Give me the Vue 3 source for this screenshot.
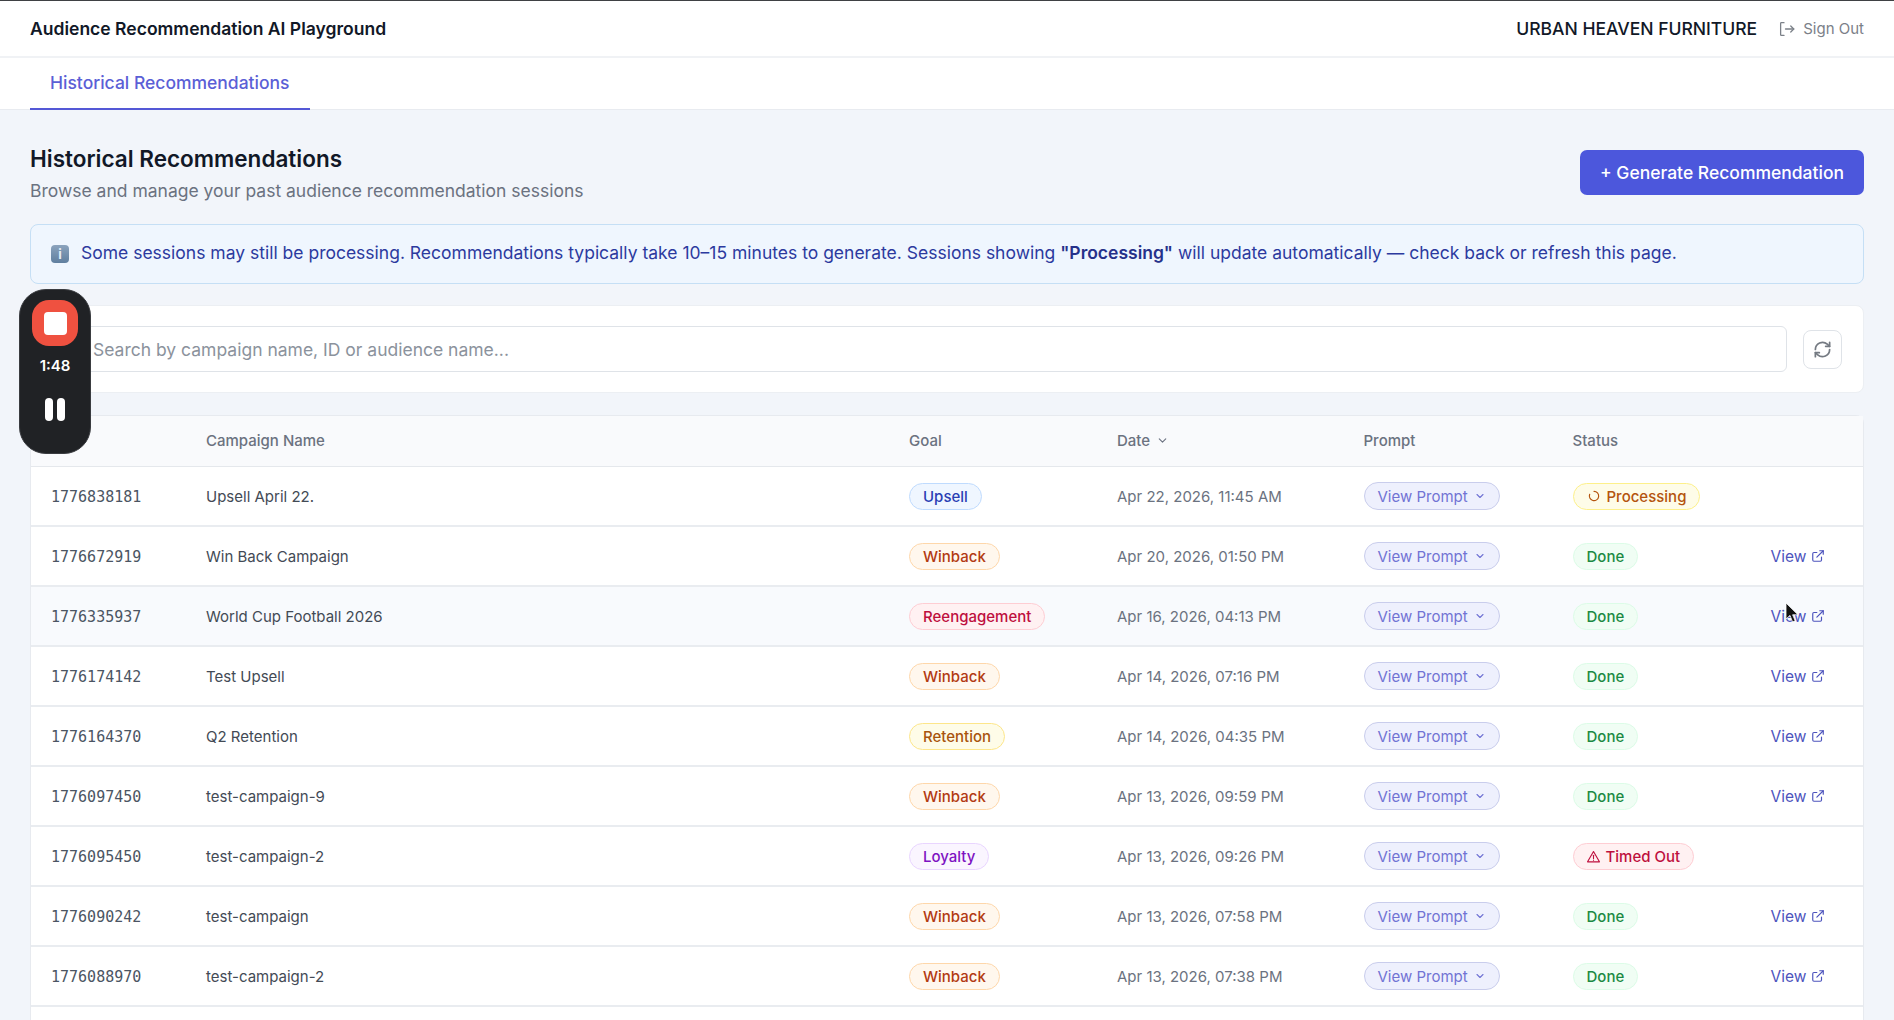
<script setup>
const rows = [
  { id: '1776838181', name: 'Upsell April 22.', goal: 'Upsell', date: 'Apr 22, 2026, 11:45 AM', status: 'Processing' },
  { id: '1776672919', name: 'Win Back Campaign', goal: 'Winback', date: 'Apr 20, 2026, 01:50 PM', status: 'Done' },
  { id: '1776335937', name: 'World Cup Football 2026', goal: 'Reengagement', date: 'Apr 16, 2026, 04:13 PM', status: 'Done', hover: true },
  { id: '1776174142', name: 'Test Upsell', goal: 'Winback', date: 'Apr 14, 2026, 07:16 PM', status: 'Done' },
  { id: '1776164370', name: 'Q2 Retention', goal: 'Retention', date: 'Apr 14, 2026, 04:35 PM', status: 'Done' },
  { id: '1776097450', name: 'test-campaign-9', goal: 'Winback', date: 'Apr 13, 2026, 09:59 PM', status: 'Done' },
  { id: '1776095450', name: 'test-campaign-2', goal: 'Loyalty', date: 'Apr 13, 2026, 09:26 PM', status: 'Timed Out' },
  { id: '1776090242', name: 'test-campaign', goal: 'Winback', date: 'Apr 13, 2026, 07:58 PM', status: 'Done' },
  { id: '1776088970', name: 'test-campaign-2', goal: 'Winback', date: 'Apr 13, 2026, 07:38 PM', status: 'Done' },
]
const statusClass = s => s === 'Done' ? 'st-done' : s === 'Processing' ? 'st-proc' : 'st-out'
</script>

<template>
  <div class="page">
    <header class="topbar">
      <div class="brand">Audience Recommendation AI Playground</div>
      <div class="top-right">
        <span class="org">URBAN HEAVEN FURNITURE</span>
        <button class="signout">
          <svg width="18" height="18" viewBox="0 0 24 24" fill="none" stroke="currentColor" stroke-width="1.7" stroke-linecap="round" stroke-linejoin="round"><path d="M8 3.5H4.5a1 1 0 0 0-1 1v15a1 1 0 0 0 1 1H8"/><path d="M10 12h11"/><path d="M17 8l4 4-4 4"/></svg>
          Sign Out
        </button>
      </div>
    </header>
    <nav class="tabs"><div class="tab">Historical Recommendations</div></nav>

    <main class="content">
      <div class="title-row">
        <div>
          <h1>Historical Recommendations</h1>
          <p>Browse and manage your past audience recommendation sessions</p>
        </div>
        <button class="primary">+ Generate Recommendation</button>
      </div>

      <div class="alert">
        <span class="info-ico">i</span>
        <span class="alert-text">Some sessions may still be processing. Recommendations typically take 10–15 minutes to generate. Sessions showing <b>"Processing"</b> will update automatically — check back or refresh this page.</span>
      </div>

      <div class="search-card">
        <input class="search" placeholder="Search by campaign name, ID or audience name..." />
        <button class="refresh">
          <svg width="19" height="19" viewBox="0 0 24 24" fill="none" stroke="currentColor" stroke-width="2.2" stroke-linecap="round" stroke-linejoin="round"><path d="M3 12a9 9 0 0 1 15-6.7L21 8"/><path d="M21 3v5h-5"/><path d="M21 12a9 9 0 0 1-15 6.7L3 16"/><path d="M8 16H3v5"/></svg>
        </button>
      </div>

      <div class="table-card">
        <div class="row head">
          <div></div>
          <div>Campaign Name</div>
          <div>Goal</div>
          <div class="date-head">Date
            <svg width="13" height="13" viewBox="0 0 24 24" fill="none" stroke="currentColor" stroke-width="2" stroke-linecap="round" stroke-linejoin="round"><path d="M6 9l6 6 6-6"/></svg>
          </div>
          <div>Prompt</div>
          <div>Status</div>
          <div></div>
        </div>
        <div v-for="r in rows" :key="r.id" class="row" :class="{ hover: r.hover }">
          <div class="id">{{ r.id }}</div>
          <div class="name">{{ r.name }}</div>
          <div><span class="pill" :class="'g-' + r.goal.toLowerCase()">{{ r.goal }}</span></div>
          <div class="date">{{ r.date }}</div>
          <div>
            <button class="prompt">View Prompt
              <svg width="12" height="12" viewBox="0 0 24 24" fill="none" stroke="currentColor" stroke-width="2.2" stroke-linecap="round" stroke-linejoin="round"><path d="M6 9l6 6 6-6"/></svg>
            </button>
          </div>
          <div>
            <span class="pill" :class="statusClass(r.status)">
              <svg v-if="r.status === 'Processing'" width="14" height="14" viewBox="0 0 24 24" fill="none" stroke="currentColor" stroke-width="2" stroke-linecap="round"><path d="M12 4a8 8 0 1 1-7.4 5"/></svg>
              <svg v-if="r.status === 'Timed Out'" width="15" height="15" viewBox="0 0 24 24" fill="none" stroke="currentColor" stroke-width="1.8" stroke-linecap="round" stroke-linejoin="round"><path d="M12 4 2.5 20.5h19z"/><path d="M12 10v5"/><path d="M12 17.6v.2"/></svg>
              {{ r.status }}
            </span>
          </div>
          <div class="action">
            <a v-if="r.status === 'Done'" class="view">View
              <svg width="14" height="14" viewBox="0 0 24 24" fill="none" stroke="currentColor" stroke-width="2" stroke-linecap="round" stroke-linejoin="round"><path d="M18 14v5a2 2 0 0 1-2 2H5a2 2 0 0 1-2-2V8a2 2 0 0 1 2-2h5"/><path d="M15 3h6v6"/><path d="M10 14 21 3"/></svg>
            </a>
          </div>
        </div>
        <div class="row tail"></div>
      </div>
    </main>

    <div class="recorder">
      <div class="rec-stop"><span></span></div>
      <div class="rec-time">1:48</div>
      <div class="rec-pause"><span></span><span></span></div>
    </div>

    <svg class="cursor" width="14" height="20" viewBox="0 0 14 20"><path d="M1 0v16l4-3.6L7.6 19l2.6-1.2-2.6-6H13z" fill="#111" stroke="#fff" stroke-width=".8"/></svg>
  </div>
</template>

<style>
html, body { margin: 0; background: #f1f5f9; }
</style>

<style scoped>
* { box-sizing: border-box; }
.page {
  position: relative;
  height: 1020px;
  overflow: hidden;
  font-family: Inter, "Liberation Sans", sans-serif;
  background: #f2f5fa;
  color: #111827;
}
button { font-family: inherit; cursor: pointer; }
.topbar {
  height: 58px;
  background: #fff;
  border-top: 1px solid #3f4144;
  border-bottom: 2px solid #f0f2f5;
  padding: 0 30px;
  display: flex;
  align-items: center;
  justify-content: space-between;
}
.brand { font-size: 17.55px; font-weight: 600; color: #111827; }
.top-right { display: flex; align-items: center; gap: 21px; }
.org { font-size: 17.55px; font-weight: 500; color: #111827; }
.signout {
  display: flex; align-items: center; gap: 7px;
  border: 0; background: none; padding: 0;
  font-size: 15px; color: #7b8088;
}
.tabs {
  height: 52px;
  background: #fff;
  padding: 0 30px;
  border-bottom: 1px solid #e8ebf0;
}
.tab {
  width: 280px;
  height: 52px;
  border-bottom: 2px solid #5458d6;
  padding: 0 0 1px 20px;
  display: flex;
  align-items: center;
  font-size: 17.5px;
  font-weight: 500;
  color: #5b5fd6;
}
.content { padding: 0 30px; }
.title-row {
  display: flex;
  justify-content: space-between;
  align-items: flex-start;
  padding-top: 35px;
  height: 114px;
}
.primary { margin-top: 5px; }
h1 { margin: 0; font-size: 22.5px; font-weight: 600; line-height: 28px; color: #111827; }
.title-row p { margin: 6px 0 0; font-size: 17.5px; line-height: 24px; color: #6b7280; }
.primary {
  width: 284px;
  height: 45px;
  background: #4c57dc;
  color: #fff;
  border: 0;
  border-radius: 7px;
  font-size: 17.5px;
  font-weight: 500;
}
.alert {
  height: 60px;
  display: flex;
  align-items: center;
  gap: 12px;
  padding-left: 20px;
  background: #eff6fe;
  border: 1px solid #c5dff5;
  border-radius: 8px;
  font-size: 17.5px;
  color: #2c3a9e;
}
.alert-text { padding-bottom: 3px; }
.alert b { font-weight: 600; color: #26318a; }
.info-ico {
  width: 18px; height: 18px;
  border-radius: 4px;
  background: linear-gradient(#8ba3bd, #5f7f9f);
  color: #e6edf4;
  font-size: 13px;
  font-weight: 700;
  display: flex; align-items: center; justify-content: center;
  flex: none;
}
.search-card {
  margin-top: 21px;
  height: 88px;
  background: #fff;
  border: 1px solid #eceff3;
  border-radius: 8px;
  padding: 0 21px;
  display: flex;
  align-items: center;
  gap: 16px;
}
.search {
  flex: 1;
  height: 46px;
  border: 1px solid #dfe3e8;
  border-radius: 6px;
  padding: 0 40px;
  font-family: inherit;
  font-size: 17.5px;
  color: #111827;
  background: #fff;
  outline: none;
}
.search::placeholder { color: #8b929c; opacity: 1; }
.refresh {
  width: 39px; height: 39px;
  background: #fff;
  border: 1px solid #dfe3e8;
  border-radius: 8px;
  color: #747a82;
  display: flex; align-items: center; justify-content: center;
  padding: 0;
}
.table-card {
  margin-top: 22px;
  background: #fff;
  border: 1px solid #e7eaef;
  border-radius: 8px 8px 0 0;
}
.row {
  display: grid;
  grid-template-columns: 155px 703px 208px 246.5px 209px 196px 1fr;
  height: 60px;
  align-items: center;
  border-bottom: 2px solid #e9ecf0;
  font-size: 15px;
}
.row > div { padding-left: 20px; }
.row.head {
  height: 51px;
  padding-bottom: 2px;
  background: #f9fafc;
  color: #6b7280;
  font-size: 15px;
  font-weight: 500;
  border-bottom: 1px solid #e5e8ec;
}
.row.hover { background: #f8fafd; }
.row.tail { border-bottom: 0; }
.date-head { display: flex; align-items: center; gap: 6px; }
.id {
  font-family: "DejaVu Sans Mono", "Liberation Mono", monospace;
  font-size: 15px;
  color: #4b5563;
  padding-top: 1px;
}
.name { color: #434a55; }
.date { color: #6b7280; }
.pill {
  display: inline-flex;
  align-items: center;
  gap: 6px;
  height: 27px;
  padding: 0 13px;
  border-radius: 14px;
  font-size: 15px;
  font-weight: 500;
  border: 1px solid;
}
.g-upsell { background: #eff6ff; border-color: #bfdbfe; color: #2a3fb4; }
.g-winback { background: #fff7ed; border-color: #fed7aa; color: #b23a12; }
.g-reengagement { background: #fff1f2; border-color: #fecdd3; color: #be0f3e; }
.g-retention { background: #fefce8; border-color: #fde68a; color: #a8540e; }
.g-loyalty { background: #faf5ff; border-color: #e9d5ff; color: #7e12c2; }
.st-done { background: #f0fdf4; border-color: #dcfce7; color: #1c8a43; }
.st-proc { background: #fefce8; border-color: #fdf08a; color: #b4540e; }
.st-out { background: #fff1f2; border-color: #fecdd3; color: #be0f3e; gap: 5px; padding: 0 13px 0 12px; }
.prompt {
  display: inline-flex;
  align-items: center;
  gap: 6px;
  height: 28px;
  padding: 0 13px;
  border-radius: 14px;
  background: #eef0fd;
  border: 1px solid #c9cdec;
  color: #7173d4;
  font-size: 15px;
  font-weight: 400;
}
.action { display: flex; }
.view {
  margin-left: 2px;
  display: inline-flex;
  align-items: center;
  gap: 5px;
  font-size: 15.5px;
  color: #4d54bd;
}
.recorder {
  position: absolute;
  left: 19px;
  top: 289px;
  width: 72px;
  height: 165px;
  border-radius: 27px;
  background: #202225;
  border: 1px solid #3a3c40;
  display: flex;
  flex-direction: column;
  align-items: center;
  padding-top: 10px;
}
.rec-stop {
  width: 46px; height: 46px;
  border-radius: 17px;
  background: #ef5140;
  display: flex; align-items: center; justify-content: center;
}
.rec-stop span { width: 23px; height: 23px; background: #fff; border-radius: 4px; }
.rec-time { margin-top: 10px; color: #fff; font-size: 15px; font-weight: 600; line-height: 20px; }
.rec-pause { margin-top: 22px; display: flex; gap: 4px; }
.rec-pause span { width: 8px; height: 23px; border-radius: 4px; background: #fff; }
.cursor { position: absolute; left: 1785px; top: 603px; }
</style>
